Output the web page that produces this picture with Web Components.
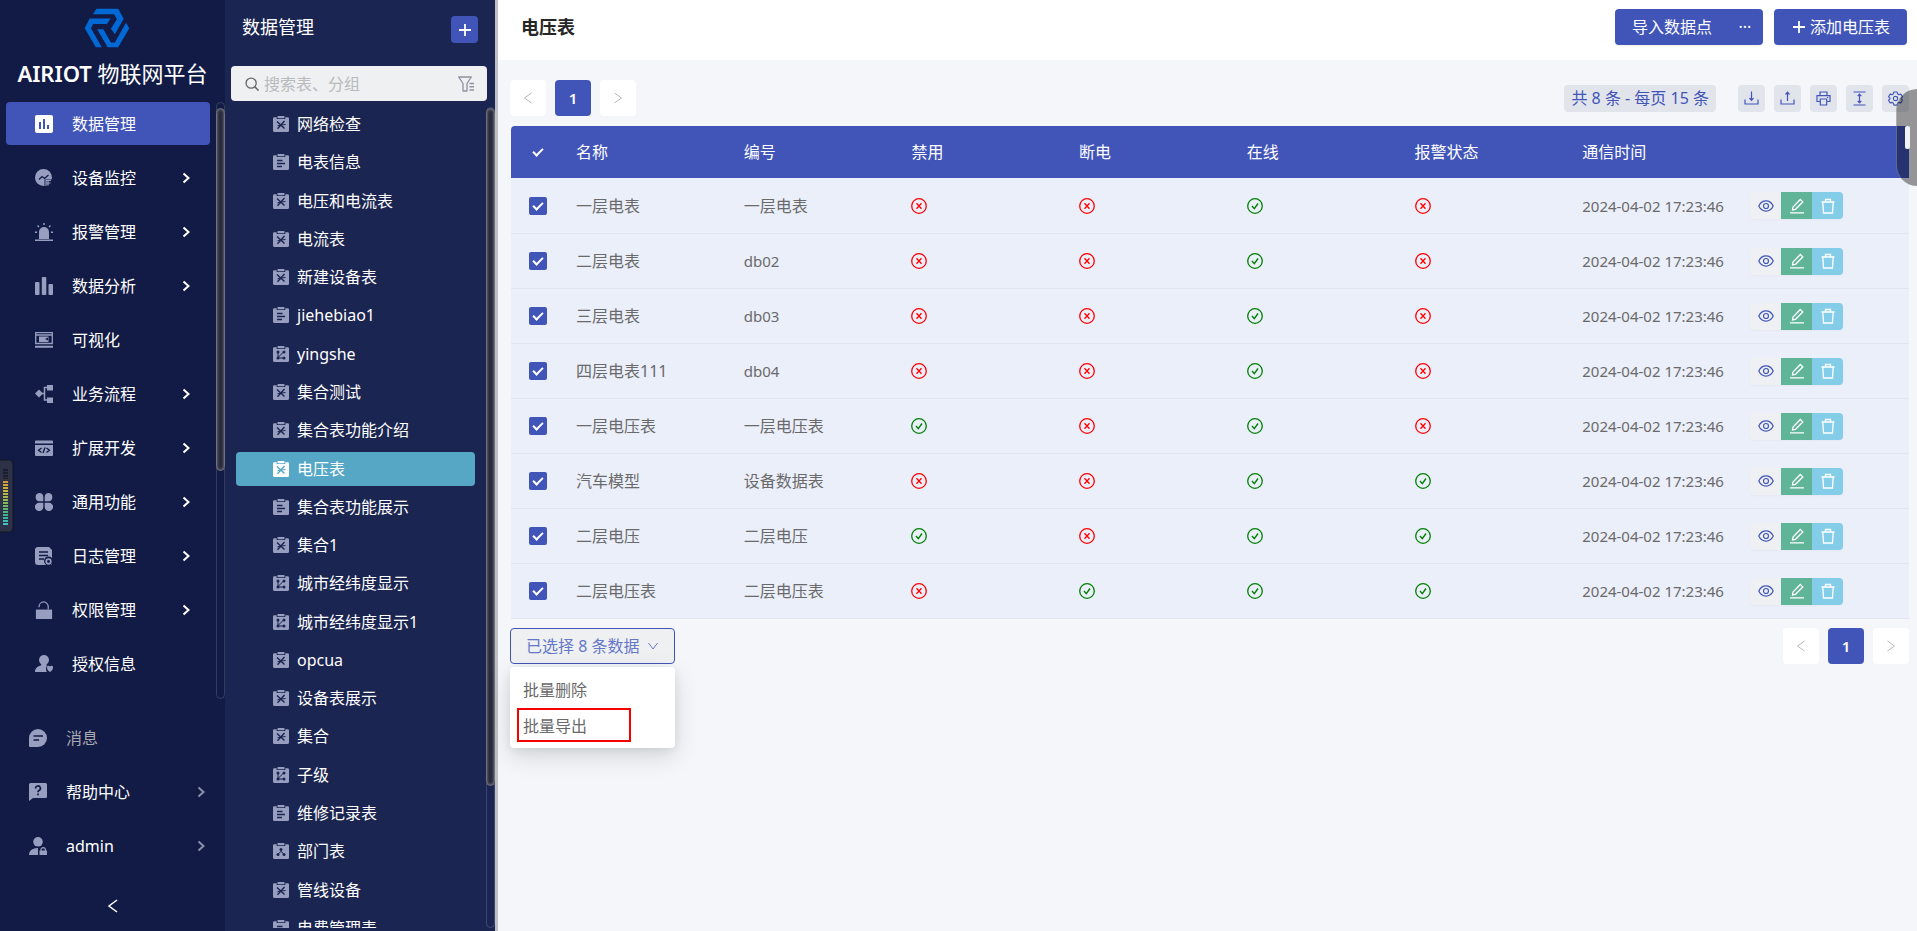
<!DOCTYPE html>
<html lang="zh-CN">
<head>
<meta charset="utf-8">
<meta name="viewport" content="width=device-width, initial-scale=1">
<title>电压表 - AIRIOT 物联网平台</title>
<style>
:root{
  --primary:#4155b9; --nav:#121b45; --nav2:#1b2551; --page:#f5f6fa;
  --icon:#989ebf; --chip:#e2e4ec; --text:#6a6a6a;
}
body{margin:0;font:16px/24px "Noto Sans","Noto Sans CJK SC",sans-serif;color:var(--text);background:var(--page)}
</style>
</head>
<body>
<app-shell>
  <side-nav slot="nav"></side-nav>
  <table-list slot="list"></table-list>
  <page-header>电压表</page-header>
  <table-view></table-view>
</app-shell>
<volume-meter></volume-meter>
<edge-drawer></edge-drawer>

<script>
const define = (name, html) => customElements.define(name, class extends HTMLElement {
  constructor(){
    super();
    const t = document.createElement('template');
    t.innerHTML = '<style>*,*::after{box-sizing:border-box}button{font:inherit;color:inherit;border:0;padding:0;margin:0;background:none;cursor:pointer}a{color:inherit;text-decoration:none}</style>' +
      (typeof html === 'function' ? html(this) : html);
    this.attachShadow({mode:'open'}).append(t.content.cloneNode(true));
  }
});

/* ---------- icons ---------- */
const clip = inner => `<path fill="currentColor" d="M1.500 1.200h2.200v1.800h8.600v-1.800h2.200a1.400 1.400 0 0 1 1.500 1.400v11.900a1.500 1.500 0 0 1-1.500 1.500h-13a1.500 1.500 0 0 1-1.500-1.500v-11.900a1.400 1.400 0 0 1 1.500-1.400z"/><rect x="4.500" y="0" width="7" height="2.200" rx=".6" fill="currentColor"/><g fill="none" stroke="var(--hole)" stroke-width="1.500">${inner}</g>`;
const ICONS = {
  data:[18,`<path fill="currentColor" d="M2 0h14a2 2 0 0 1 2 2v14a2 2 0 0 1-2 2H2a2 2 0 0 1-2-2V2a2 2 0 0 1 2-2z"/><path fill="var(--hole)" d="M4 7h2v7H4zM8 4h2v10H8zM12 10h2v4h-2z"/>`],
  monitor:[18,`<circle cx="8.500" cy="8.500" r="8.500" fill="currentColor"/><path d="M4 10.500l3-3 2.500 2 4-3.500" fill="none" stroke="var(--hole)" stroke-width="1.300"/><path d="M9.500 18v-7.500h8v5h-5.500V18z" fill="var(--hole)"/><path d="M11 17v-5.500h5M11.500 14h4M13 11.500v5" fill="none" stroke="currentColor" stroke-width="1.200"/>`],
  alarm:[18,`<path fill="currentColor" d="M4 16V9a5 5 0 0 1 10 0v7zM0 16.500h18V18H0zM8.300 0h1.500v2H8.300zM2 3l1-1 1.500 1.500-1 1zM13.500 3.500L15 2l1 1-1.500 1.500zM0 8.500h2V10H0zM16 8.500h2V10h-2z"/>`],
  bars:[18,`<rect x="0" y="5" width="4.500" height="13" rx="1" fill="currentColor"/><rect x="6.800" y="0" width="4.500" height="18" rx="1" fill="currentColor"/><rect x="13.500" y="7" width="4.500" height="11" rx="1" fill="currentColor"/>`],
  visual:[18,`<path d="M.7 1.700h16.600v10.800H.7zM.7 4h16.600" fill="none" stroke="currentColor" stroke-width="1.300"/><path fill="currentColor" d="M4 5.500h9.500v5.500H4zM0 14.800h18v2H0z"/><path d="M10 8l3-1.500v3z" fill="var(--hole)"/>`],
  flow:[18,`<path fill="currentColor" d="M4 4.500l4 4-4 4-4-4zM12 0h6v5.500h-6zM12 12.500h6V18h-6z"/><path d="M7 8.500h3M13 2.500H9.500v12.500H13" fill="none" stroke="currentColor" stroke-width="1.500"/>`],
  code:[18,`<path fill="currentColor" d="M1 1.500h16a1 1 0 0 1 1 1V4.500H0v-2a1 1 0 0 1 1-1zM0 6h18v10a1 1 0 0 1-1 1H1a1 1 0 0 1-1-1z"/><path d="M6.500 9L3.500 11.300 6.500 13.600M11.500 9l3 2.300-3 2.300M10 8.500L8 14" fill="none" stroke="var(--hole)" stroke-width="1.300"/>`],
  clover:[18,`<path fill="currentColor" d="M4.200 0A4.200 4.200 0 0 1 8.300 4.200V8.300H4.200A4.200 4.200 0 0 1 4.200 0zM13.800 0a4.200 4.200 0 0 1 0 8.300H9.700V4.200A4.200 4.200 0 0 1 13.800 0zM4.200 9.700h4.100v4.100A4.200 4.200 0 1 1 4.200 9.700zM9.700 9.700h4.100a4.200 4.200 0 1 1-4.100 4.100z"/>`],
  log:[18,`<path fill="currentColor" d="M3 0h11l3 3v14a1 1 0 0 1-1 1H3a3 3 0 0 1-3-3V3a3 3 0 0 1 3-3z"/><path d="M4 5h9M4 8.500h9M4 12h5" fill="none" stroke="var(--hole)" stroke-width="1.400"/><circle cx="13.500" cy="14" r="4.500" fill="var(--hole)"/><circle cx="13.500" cy="14.500" r="2.300" fill="none" stroke="currentColor" stroke-width="1.700"/>`],
  lock:[20,`<path fill="currentColor" d="M1 9.500h18V20H1z"/><path d="M4.500 7V6.200a5 5 0 0 1 10.200 0V9.500" fill="none" stroke="currentColor" stroke-width="1.400"/>`],
  auth:[18,`<circle cx="9" cy="5" r="5" fill="currentColor"/><path fill="currentColor" d="M6.500 8h5v2l2 2-2 5H0c0-4 3-6 6-6.500z"/><circle cx="15" cy="13.800" r="4" fill="var(--hole)"/><path fill="currentColor" d="M12 12.500a1.500 1.500 0 0 1 3-.5 1.500 1.500 0 0 1 3 .5c0 2-1.500 3.500-3 4.500-1.500-1-3-2.500-3-4.500z"/>`],
  msg:[18,`<path fill="currentColor" d="M9 0a9 9 0 0 1 0 18H1a1 1 0 0 1-1-1V9a9 9 0 0 1 9-9z"/><path d="M4.500 7h9.500M4.500 11h5.500" fill="none" stroke="var(--hole)" stroke-width="1.700"/>`],
  help:[18,`<path fill="currentColor" d="M1.500 0h15A1.500 1.500 0 0 1 18 1.500v12a1.500 1.500 0 0 1-1.500 1.500H4l-4 3V1.500A1.500 1.500 0 0 1 1.500 0z"/><path d="M6.600 5.500a2.400 2.400 0 1 1 3.400 2q-1 .6-1 1.800M9 10.600v1.700" fill="none" stroke="var(--hole)" stroke-width="1.700"/>`],
  user:[18,`<circle cx="9" cy="4.800" r="4.800" fill="currentColor"/><path fill="currentColor" d="M0 18c0-4 3-7 9-7v7z"/><path fill="currentColor" d="M10.500 13.500h7.500V18h-7.500z"/><path d="M12 14v-1.200a2.200 2.200 0 0 1 4.400 0V14" fill="none" stroke="currentColor" stroke-width="1.200"/>`],
  right:[12,`<path d="M3.500 1.500l5 4.500-5 4.500" fill="none" stroke="currentColor" stroke-width="2"/>`],
  back:[14,`<path d="M11 1L3 7l8 6" fill="none" stroke="currentColor" stroke-width="1.500"/>`],
  prev:[12,`<path d="M9.500 1l-7 5 7 5" fill="none" stroke="currentColor"/>`],
  next:[12,`<path d="M2.500 1l7 5-7 5" fill="none" stroke="currentColor"/>`],
  down:[12,`<path d="M1.500 3l4.500 6 4.500-6" fill="none" stroke="currentColor"/>`],
  plus:[14,`<path d="M7 1v12M1 7h12" fill="none" stroke="currentColor" stroke-width="1.800"/>`],
  search:[16,`<circle cx="7" cy="7" r="5.800" fill="none" stroke="currentColor" stroke-width="1.500"/><path d="M11 11l4.500 4.500" stroke="currentColor" stroke-width="1.700"/>`],
  filter:[16,`<path d="M.7 1h12.600L9 7.500V15H5V7.500z" fill="none" stroke="currentColor" stroke-width="1.300" stroke-linejoin="round"/><path d="M11.500 7.500H16M11.500 10.800H16M11.500 14H16" stroke="currentColor" stroke-width="1.400"/>`],
  device:[16,clip(`<path d="M4 5.500l7.500 7M11.500 5L4.500 12.800" stroke-width="1.400"/><path d="M8.500 9l4-.5M4.500 9.800l3.500-.8" stroke-width="1"/>`)],
  form:[16,clip(`<path d="M4 6.500h5.500M4 9.500h8M4 12.500h5"/>`)],
  link:[16,clip(`<path d="M5 5.500v6.500h6.500M5 11.500l6-6" stroke-width="1"/><g fill="var(--hole)" stroke="none"><circle cx="5" cy="6" r="1.500"/><circle cx="5" cy="12" r="1.500"/><circle cx="11" cy="6" r="1.500"/><circle cx="11" cy="12" r="1.500"/></g>`)],
  dept:[16,clip(`<path d="M8 6.500v2M5 11l3-2.500 3 2.500" stroke-width="1"/><g fill="var(--hole)" stroke="none"><circle cx="8" cy="6.500" r="1.500"/><circle cx="5" cy="11.500" r="1.500"/><circle cx="11" cy="11.500" r="1.500"/></g>`)],
  download:[15,`<path d="M1 8.500v4.500h13V8.500M7.500 .5V9M5.500 7l2 2.300 2-2.300" fill="none" stroke="currentColor" stroke-width="1.200"/>`],
  upload:[15,`<path d="M1 8.500v4.500h13V8.500M7.500 10V1M5.500 3.500l2-2.300 2 2.300" fill="none" stroke="currentColor" stroke-width="1.200"/>`],
  print:[15,`<path d="M4 4.700V1h7v3.700M4 10.500H1V4.700h13v5.800H11M4.300 8h6.400v6H4.300z" fill="none" stroke="currentColor" stroke-width="1.200"/><path d="M11 6.500h1.300" stroke="currentColor"/>`],
  height:[15,`<path d="M1.500 1h12M1.500 14h12M7.500 3.500v8M5.700 5.200l1.800-2 1.800 2M5.700 9.800l1.800 2 1.800-2" fill="none" stroke="currentColor" stroke-width="1.200"/>`],
  gear:[15,`<g transform="scale(.9375)"><path d="M6.300 1h3.400l.5 2 1.500.9 2-.6 1.700 2.900-1.500 1.400v.8l1.500 1.400-1.700 2.900-2-.6-1.500.9-.5 2H6.300l-.5-2-1.500-.9-2 .6L.6 9.800l1.500-1.400v-.8L.6 6.200l1.700-2.900 2 .6L5.800 3z" fill="none" stroke="currentColor" stroke-width="1.200" stroke-linejoin="round"/><circle cx="8" cy="8" r="2.300" fill="none" stroke="currentColor" stroke-width="1.200"/></g>`],
  eye:[16,`<path d="M.8 8C4 1.200 12 1.200 15.200 8 12 14.800 4 14.800.8 8z" fill="none" stroke="currentColor" stroke-width="1.200"/><circle cx="8" cy="8" r="2.500" fill="none" stroke="currentColor" stroke-width="1.200"/>`],
  edit:[16,`<path d="M1 14.800h14M3.500 12l.5-3L11.300 1.500l2.500 2.400L6.500 11.300z" fill="none" stroke="currentColor" stroke-width="1.300"/>`],
  trash:[16,`<path d="M1.500 4h13M5.500 4V1.500h5V4M2.800 4l.7 11h9l.7-11" fill="none" stroke="currentColor" stroke-width="1.300"/>`],
  no:[16,`<circle cx="8" cy="8" r="7.300" fill="none" stroke="currentColor" stroke-width="1.300"/><path d="M5.500 5.200l5 5.600M10.500 5.200l-5 5.600" fill="none" stroke="currentColor" stroke-width="1.300"/>`],
  yes:[16,`<circle cx="8" cy="8" r="7.300" fill="none" stroke="currentColor" stroke-width="1.300"/><path d="M5 8l2.300 2.600L11 5.500" fill="none" stroke="currentColor" stroke-width="1.400"/>`],
};
define('app-icon', el => {
  const [n, body] = ICONS[el.getAttribute('name')];
  const size = el.getAttribute('size') || n;
  return `<style>:host{display:inline-flex;flex:none}svg{display:block}</style>
  <svg width="${size}" height="${size}" viewBox="0 0 ${n} ${n}" aria-hidden="true">${body}</svg>`;
});

/* ---------- scroll rail ---------- */
define('scroll-rail', `<style>
:host{display:block;width:9px;border:1px solid #ffffff26;border-radius:5px;box-sizing:border-box}
i{display:block;height:var(--thumb);margin:var(--start,0) -1px 0;border-radius:5px;background:#292b3d;border:1px solid #70717c;box-shadow:inset 0 0 3px #8a8b93}
</style><i></i>`);

/* ---------- shell ---------- */
define('app-shell', `<style>
:host{display:grid;grid-template-columns:225px 270px minmax(0,1fr);height:100vh;overflow:hidden}
main{display:flex;flex-direction:column;border-left:3px solid #bfbfc5;min-width:0;background:var(--page)}
</style><slot name="nav"></slot><slot name="list"></slot><main><slot></slot></main>`);

/* ---------- first sidebar ---------- */
define('nav-item', el => `<style>
:host{display:block;color:#fff;--hole:var(--nav)}
a{display:flex;align-items:center;height:43px;margin:0 6px 11px;padding:0 18px 0 29px;border-radius:4px}
app-icon.lead{color:var(--icon);width:18px;margin-right:19px;justify-content:center}
span{flex:1}
:host([active]) a{background:var(--primary);--hole:var(--primary)}
:host([active]) .lead{color:#fff}
:host([minor]) a{margin:0 0 11px;padding:0 18px 0 29px}
:host([minor]) .arrow{color:#8b90aa}
:host([dim]) span{color:#a9a9b0}
</style><a href="#"><app-icon class="lead" name="${el.getAttribute('icon')}"></app-icon><span><slot></slot></span>${el.hasAttribute('more') ? '<app-icon class="arrow" name="right"></app-icon>' : ''}</a>`);

define('side-nav', `<style>
:host{display:flex;flex-direction:column;background:var(--nav);color:#fff;min-height:0}
.brand{display:flex;flex-direction:column;align-items:center;height:102px;padding-top:8px}
h1{margin:9px 0 0;font-size:22px;line-height:32px;font-weight:400;white-space:nowrap}
b{font-weight:600}
.logo{margin-right:12px}
.menu{flex:1;display:flex;min-height:0}
nav{flex:1;min-width:0;overflow:hidden}
scroll-rail{--thumb:363px;--start:5px}
.foot{padding-top:17px}
.fold{display:flex;justify-content:center;align-items:center;width:100%;height:53px;padding-top:2px}
</style>
<div class="brand">
  <svg class="logo" width="46" height="40" viewBox="250 24 140 122" role="img" aria-label="AIRIOT"><g fill="#0069d6">
    <path d="M288 26H354L371 57L344 104L332 87L350 58L342 43H277z"/>
    <path d="M267 56H331L320 73H278L271 86L304 144H286L252 86z"/>
    <path d="M290 89H309L332 129H344L378 69L388 86L354 144H322z"/></g></svg>
  <h1><b>AIRIOT</b> 物联网平台</h1>
</div>
<div class="menu">
  <nav aria-label="主菜单">
    <nav-item icon="data" active>数据管理</nav-item>
    <nav-item icon="monitor" more>设备监控</nav-item>
    <nav-item icon="alarm" more>报警管理</nav-item>
    <nav-item icon="bars" more>数据分析</nav-item>
    <nav-item icon="visual">可视化</nav-item>
    <nav-item icon="flow" more>业务流程</nav-item>
    <nav-item icon="code" more>扩展开发</nav-item>
    <nav-item icon="clover" more>通用功能</nav-item>
    <nav-item icon="log" more>日志管理</nav-item>
    <nav-item icon="lock" more>权限管理</nav-item>
    <nav-item icon="auth">授权信息</nav-item>
  </nav>
  <scroll-rail></scroll-rail>
</div>
<div class="foot">
  <nav-item icon="msg" minor dim>消息</nav-item>
  <nav-item icon="help" minor more>帮助中心</nav-item>
  <nav-item icon="user" minor more>admin</nav-item>
  <button class="fold" aria-label="收起菜单"><app-icon name="back"></app-icon></button>
</div>`);

/* ---------- second sidebar ---------- */
define('list-item', el => `<style>
:host{display:flex;align-items:center;color:#fff;--hole:var(--nav2)}
a{flex:1;display:flex;align-items:center;height:34px;padding-left:37px;border-radius:4px}
app-icon{color:var(--icon);margin-right:8px}
:host([active]) a{background:#56a7c5;--hole:#56a7c5}
:host([active]) app-icon{color:#fff}
</style><a href="#"><app-icon name="${el.getAttribute('icon')}"></app-icon><slot></slot></a>`);

const LISTS = [['device','网络检查'],['form','电表信息'],['device','电压和电流表'],['device','电流表'],['device','新建设备表'],
  ['form','jiehebiao1'],['link','yingshe'],['device','集合测试'],['device','集合表功能介绍'],['device','电压表',1],['form','集合表功能展示'],
  ['device','集合1'],['link','城市经纬度显示'],['link','城市经纬度显示1'],['device','opcua'],['device','设备表展示'],['device','集合'],
  ['link','子级'],['form','维修记录表'],['dept','部门表'],['device','管线设备'],['form','电费管理表']];
define('table-list', `<style>
:host{display:flex;flex-direction:column;background:var(--nav2);color:#fff;min-height:0;padding-bottom:3px}
header{display:flex;align-items:center;justify-content:space-between;height:56px;padding:3px 17px 0 17px}
h2{margin:0 0 5px;font-size:18px;font-weight:400;line-height:28px}
.add{display:flex;align-items:center;justify-content:center;width:27px;height:27px;border-radius:4px;background:var(--primary)}
.search{display:flex;align-items:center;gap:5px;height:35px;margin:10px 8px 0 6px;padding:0 13px 0 14px;border-radius:4px;background:#eef0f2;color:#666}
input{flex:1;min-width:0;border:0;outline:0;padding:0;background:none;font:inherit;color:#555}
input::placeholder{color:#b9babd}
.filter{display:flex;color:#8d92a0}
.body{flex:1;display:flex;min-height:0;margin-top:4px}
nav{flex:1;overflow:hidden;padding:0 11px}
.rows{display:grid;grid-auto-rows:1fr;min-height:842px}
scroll-rail{--thumb:678px;margin-top:2px}
</style>
<header><h2>数据管理</h2><button class="add" aria-label="新建"><app-icon name="plus"></app-icon></button></header>
<div class="search"><app-icon name="search" size="14"></app-icon><input type="text" placeholder="搜索表、分组" aria-label="搜索表、分组"><button class="filter" aria-label="筛选"><app-icon name="filter"></app-icon></button></div>
<div class="body"><nav aria-label="数据表"><div class="rows">${LISTS.map(([i,t,a]) => `<list-item icon="${i}"${a ? ' active' : ''}>${t}</list-item>`).join('')}</div></nav><scroll-rail></scroll-rail></div>`);

/* ---------- header ---------- */
define('page-header', `<style>
:host{display:flex;align-items:center;justify-content:space-between;height:60px;padding:0 10px 6px 23px;background:#fff;flex:none;box-sizing:border-box}
h1{margin:0;font-size:18px;line-height:28px;font-weight:700;color:#262626}
.actions{display:flex;gap:11px;color:#fff}
.group{display:flex}
button{display:flex;align-items:center;justify-content:center;gap:4px;height:36px;background:var(--primary);border-radius:4px;box-shadow:0 2px 1px #0000000a}
.import{padding:0 15px 0 17px;border-radius:4px 0 0 4px}
.more{width:36px;border-radius:0 4px 4px 0}
.new{padding:0 17px 0 18px}
</style><h1><slot></slot></h1>
<div class="actions"><div class="group"><button class="import">导入数据点</button><button class="more" aria-label="更多">···</button></div>
<button class="new"><app-icon name="plus"></app-icon>添加电压表</button></div>`);

/* ---------- pager ---------- */
define('data-pager', `<style>
:host{display:flex;gap:9px}
button{display:flex;align-items:center;justify-content:center;width:36px;height:36px;border-radius:4px;background:#fff;color:#b8b8b8}
.on{background:var(--primary);color:#fff;font-weight:600;font-size:15px}
</style><button aria-label="上一页"><app-icon name="prev"></app-icon></button><button class="on" aria-current="page">1</button><button aria-label="下一页"><app-icon name="next"></app-icon></button>`);

/* ---------- toolbar ---------- */
define('tool-bar', `<style>
:host{display:flex;gap:9px;color:var(--primary)}
span,button{height:27px;border-radius:4px;background:var(--chip)}
span{padding:0 7px;margin-right:13px;line-height:26px}
button{display:flex;align-items:center;justify-content:center;width:27px}
</style><span>共 8 条 - 每页 15 条</span>
<button aria-label="下载"><app-icon name="download"></app-icon></button>
<button aria-label="上传"><app-icon name="upload"></app-icon></button>
<button aria-label="打印"><app-icon name="print"></app-icon></button>
<button aria-label="行高"><app-icon name="height"></app-icon></button>
<button aria-label="设置"><app-icon name="gear"></app-icon></button>`);

/* ---------- table ---------- */
const ROWS = [['一层电表','一层电表','0010'],['二层电表','db02','0010'],['三层电表','db03','0010'],['四层电表111','db04','0010'],
  ['一层电压表','一层电压表','1010'],['汽车模型','设备数据表','0011'],['二层电压','二层电压','1011'],['二层电压表','二层电压表','0111']];
const state = v => v === '1' ? '<app-icon class="yes" name="yes" role="img" aria-label="是"></app-icon>' : '<app-icon class="no" name="no" role="img" aria-label="否"></app-icon>';
define('data-table', `<style>
:host{display:block}
table{width:100%;table-layout:fixed;border-collapse:separate;border-spacing:0;text-align:left}
th,td{padding:0 10px;white-space:nowrap}
th{height:52px;background:var(--primary);color:#fff;font-weight:400}
th:first-child{border-top-left-radius:4px}
td{height:55px;background:#eaeffa;border-bottom:1px solid #e1e5f0}
tbody tr:first-child td{height:56px}
th.act{width:169px}
.pick{width:55px;padding:0 0 0 18px}
.latin{font-size:15px}
input{appearance:none;display:block;position:relative;width:18px;height:18px;margin:0;border-radius:2px;background:var(--primary)}
input:checked::after{content:"";position:absolute;left:6px;top:3px;width:6px;height:10px;border:solid #fff;border-width:0 2px 2px 0;transform:rotate(45deg)}
td>app-icon{display:flex}
.yes{color:#008000}.no{color:#f00}
.ops{display:flex}
.ops button{display:flex;align-items:center;justify-content:center;width:31px;height:27px;color:#fff;box-shadow:0 1px 2px #00000008}
.ops .see{background:#eef0f3;color:var(--primary);border-radius:4px 0 0 4px}
.ops .edit{background:#60b497}
.ops .del{background:#84cde8;border-radius:0 4px 4px 0}
</style>
<table><thead><tr><th class="pick"><input type="checkbox" checked aria-label="全选"></th>
${['名称','编号','禁用','断电','在线','报警状态','通信时间'].map(t => `<th>${t}</th>`).join('')}<th class="act" aria-label="操作"></th></tr></thead>
<tbody>${ROWS.map(([n,c,s]) => `<tr><td class="pick"><input type="checkbox" checked aria-label="选择 ${n}"></td><td>${n}</td><td${/^db/.test(c) ? ' class="latin"' : ''}>${c}</td>
${[...s].map(v => `<td>${state(v)}</td>`).join('')}<td class="latin">2024-04-02 17:23:46</td>
<td><div class="ops"><button class="see" aria-label="查看"><app-icon name="eye"></app-icon></button><button class="edit" aria-label="编辑"><app-icon name="edit"></app-icon></button><button class="del" aria-label="删除"><app-icon name="trash"></app-icon></button></div></td></tr>`).join('')}</tbody></table>`);

/* ---------- batch menu ---------- */
define('batch-menu', `<style>
:host{display:block;position:relative;width:165px}
.trigger{display:flex;align-items:center;justify-content:space-between;width:100%;height:36px;padding:0 15px;border:1px solid var(--primary);border-radius:4px;background:#eef0f2;color:#6677c8;white-space:nowrap}
.menu{position:absolute;top:39px;left:0;right:0;padding:5px 0 4px;border-radius:4px;background:#fff;box-shadow:0 8px 24px #00000024,0 2px 8px #00000010}
.menu button{display:block;width:100%;height:36px;padding-left:13px;text-align:left;position:relative}
.menu .marked::after{content:"";position:absolute;left:7px;top:0;width:114px;height:34px;border:2px solid #f60000}
</style><button class="trigger" aria-haspopup="menu" aria-expanded="true">已选择 8 条数据<app-icon name="down"></app-icon></button>
<div class="menu" role="menu"><button role="menuitem">批量删除</button><button role="menuitem" class="marked">批量导出</button></div>`);

define('table-view', `<style>
:host{display:block;padding:20px 8px 0 12px}
.bar{display:flex;justify-content:space-between;align-items:center}
data-table{margin:10px 0 9px 1px}
</style><div class="bar"><data-pager></data-pager><tool-bar></tool-bar></div>
<data-table></data-table>
<div class="bar"><batch-menu></batch-menu><data-pager></data-pager></div>`);

/* ---------- floating widgets ---------- */
define('volume-meter', `<style>
:host{position:fixed;left:0;top:460px;width:13px;height:72px;box-sizing:border-box;padding:7px 4px 6px 3px;background:#2d3248;border:1px solid #20242f;border-left:0;border-radius:0 4px 4px 0;box-shadow:0 0 2px #0008}
i{display:block;height:100%;background:repeating-linear-gradient(#292e42 0 1px,transparent 1px 3px),linear-gradient(#1b1e2c 0 20%,#d8903a 21%,#c9b93c 40%,#7fb85a 62%,#35b596 85%,#45c5c0)}
</style><i></i>`);
define('edge-drawer', `<style>
:host{position:fixed;right:0;top:89px;width:21px;height:97px;box-sizing:border-box;padding:37px 0 0 8px;border-radius:21px 0 0 21px;background:#00000064;border-left:1px solid #ffffff40}
i{display:block;width:5px;height:23px;border-radius:2px;background:#f1f2f4}
</style><i></i>`);
</script>
</body>
</html>
